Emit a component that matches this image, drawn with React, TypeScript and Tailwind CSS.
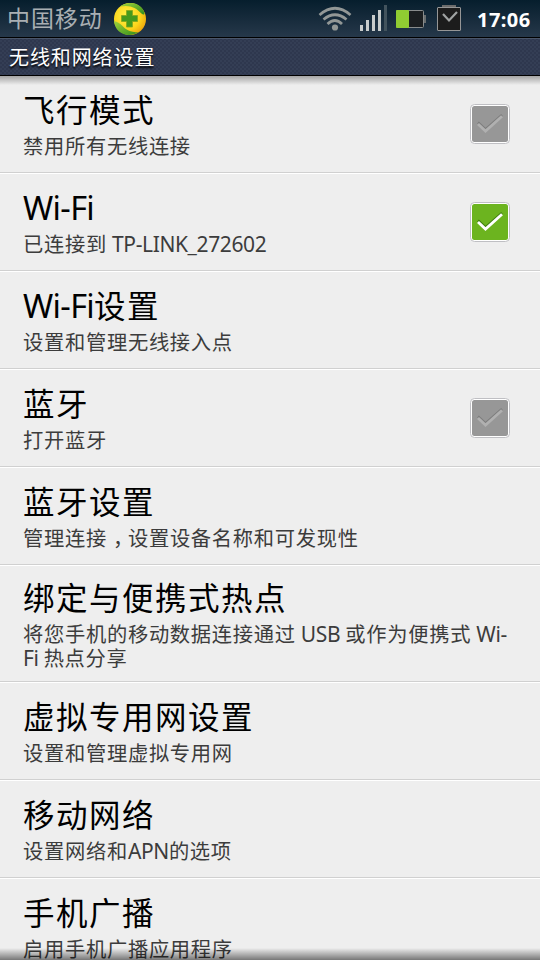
import React from 'react';

type Item = { title: React.ReactNode; sub: React.ReactNode; check?: 'on' | 'off'; tall?: boolean };

const TL = ({ children }: { children: React.ReactNode }) => (
  <span className="tracking-[-0.65px] text-[32.5px]">{children}</span>
);
const SL = ({ children }: { children: React.ReactNode }) => (
  <span className="tracking-[-0.38px] text-[21px]">{children}</span>
);

const items: Item[] = [
  { title: '飞行模式', sub: '禁用所有无线连接', check: 'off' },
  { title: <TL>Wi-Fi</TL>, sub: <>已连接到<SL> TP-LINK_272602</SL></>, check: 'on' },
  { title: <><TL>Wi-Fi</TL>设置</>, sub: '设置和管理无线接入点' },
  { title: '蓝牙', sub: '打开蓝牙', check: 'off' },
  { title: '蓝牙设置', sub: <>管理连接<span className="mr-[-6px] pl-[6px]">，</span>设置设备名称和可发现性</> },
  {
    title: '绑定与便携式热点',
    sub: (
      <>
        <div className="h-[24px]">将您手机的移动数据连接通过<SL> USB </SL>或作为便携式<SL> Wi-</SL></div>
        <div className="h-[24px]"><SL>Fi </SL>热点分享</div>
      </>
    ),
    tall: true,
  },
  { title: '虚拟专用网设置', sub: '设置和管理虚拟专用网' },
  { title: '移动网络', sub: <>设置网络和<SL>APN</SL>的选项</> },
  { title: '手机广播', sub: '启用手机广播应用程序' },
];

function Check({ on }: { on: boolean }) {
  return (
    <svg width="40" height="40" viewBox="0 0 40 40" className="mt-[-2px] shrink-0">
      <rect x="0.5" y="0.5" width="39" height="39" rx="4" fill="#fff" stroke="#bfbfc3" />
      <rect x="2" y="2" width="36" height="36" rx="2.5" fill={on ? '#6cb41f' : '#979797'} />
      <path d="M8 18.5L15.500 25.500L32 11" fill="none" stroke={on ? '#3f7d10' : '#7c7c7c'} strokeWidth="2.5" />
      <path d="M8 20L15.500 27L32 12.300" fill="none" stroke={on ? '#fff' : '#b0b0b0'} strokeWidth="2.8" />
    </svg>
  );
}

function SafetyLogo() {
  return (
    <svg width="34" height="34" viewBox="0 0 34 34">
      <defs>
        <radialGradient id="ball" cx="40%" cy="40%" r="65%">
          <stop offset="0" stopColor="#fff34a" />
          <stop offset="0.65" stopColor="#fbd51b" />
          <stop offset="1" stopColor="#eda60c" />
        </radialGradient>
        <linearGradient id="leaf" x1="0" y1="0" x2="1" y2="1">
          <stop offset="0" stopColor="#a3d43a" />
          <stop offset="1" stopColor="#2f8d1c" />
        </linearGradient>
      </defs>
      <circle cx="17" cy="17" r="16" fill="url(#ball)" />
      <path d="M7 4.500C15 -1.500 28 0 31.500 11C31.500 13 30 13 28.500 11.500C23 5.500 17 2.500 7 4.500Z" fill="url(#leaf)" />
      <path d="M1 19C2 31 14 36.500 25.500 30.500C17 30 13 28 9 23.500C5.500 20 3 19.500 1 19Z" fill="url(#leaf)" />
      <path d="M13.500 8.500H19.500V13.500H24.500V19.500H19.500V25H13.500V19.500H8.500V13.500H13.500Z" fill="#459a1d" stroke="#84a51a" strokeWidth="0.8" strokeLinejoin="round" />
    </svg>
  );
}

function StatusIcons() {
  return (
    <svg width="152" height="37" viewBox="0 0 152 37">
      <g fill="none" stroke="#929796" strokeWidth="2.7">
        <path d="M1.500 15Q17 1.500 32.500 15" />
        <path d="M5.500 19.500Q17 10 28.500 19.500" />
        <path d="M9.500 24Q17 17 24 24" />
      </g>
      <circle cx="17" cy="27.500" r="3.100" fill="#929796" />
      <g fill="#c8cccc">
        <rect x="42" y="25" width="3" height="6" />
        <rect x="48" y="20" width="3" height="11" />
        <rect x="54" y="15" width="3" height="16" />
        <rect x="60" y="10" width="3" height="21" />
      </g>
      <rect x="66" y="5" width="3" height="26" fill="#42535d" />
      <rect x="78.500" y="10.500" width="27" height="17" rx="1" fill="#1b1e20" stroke="#898c8c" />
      <rect x="78" y="10" width="13" height="18" rx="1" fill="#90cc32" />
      <rect x="106" y="15" width="2" height="8" fill="#686c6d" />
      <rect x="124" y="5" width="14" height="2.500" fill="#6c6c6c" />
      <rect x="119.500" y="7.500" width="23" height="23" rx="0.500" fill="#1c1c1c" stroke="#969696" />
      <path d="M125 14L131 20.500L139 12" fill="none" stroke="#a0a3a3" strokeWidth="2.200" />
    </svg>
  );
}

export default function App() {
  return (
    <div
      lang="zh-CN"
      className="relative flex h-[960px] w-[540px] flex-col overflow-hidden bg-[#eeeeee] font-['Noto_Sans','Noto_Sans_CJK_SC',sans-serif]"
    >
      <header className="flex h-[37px] shrink-0 items-center bg-linear-to-b from-[#061e2d] to-[#26384a]">
        <span className="ml-[7px] w-[105px] whitespace-nowrap text-[23px] leading-[37px] tracking-[0.9px] text-[#a9afb3]">中国移动</span>
        <span className="mt-[1px] ml-[1px]"><SafetyLogo /></span>
        <span className="ml-[171px]"><StatusIcons /></span>
        <span className="mt-[1px] ml-[7px] text-[20px] leading-[35px] font-bold tracking-[0.45px] whitespace-nowrap text-white">17:06</span>
      </header>
      <div className="h-[39px] shrink-0 border-y border-black bg-[#323a51] bg-[repeating-conic-gradient(#343e55_0_25%,#2e374e_0_50%)] bg-size-[4px_4px] pt-[1px] pl-[9px] text-[20px] leading-[38px] tracking-[0.9px] text-white [text-shadow:0_2px_2px_#000] inset-shadow-[0_1px_0_#4a566a]">
        无线和网络设置
      </div>
      <main className="flex flex-col bg-[linear-gradient(#a4a4a4,#eeeeee_9px)]">
        {items.map((it, i) => (
          <section
            key={i}
            className={`flex shrink-0 items-center justify-between border-b border-white pr-[30px] pl-[23px] shadow-[inset_0_-1px_0_#d0d0d0] ${it.tall ? 'h-[117px]' : 'h-[98px]'}`}
          >
            <div className={it.tall ? 'mt-[-1px]' : 'mt-[-3px]'}>
              <div className="h-[42px] text-[31.5px] leading-[42px] tracking-[1.5px] whitespace-nowrap text-black">{it.title}</div>
              <div className="mt-[3px] text-[20.3px] leading-[24px] tracking-[0.7px] whitespace-nowrap text-[#3c3c3c]">{it.sub}</div>
            </div>
            {it.check && <Check on={it.check === 'on'} />}
          </section>
        ))}
      </main>
      <div className="absolute inset-x-0 bottom-0 h-[12px] bg-linear-to-b from-transparent to-black/50" />
    </div>
  );
}
